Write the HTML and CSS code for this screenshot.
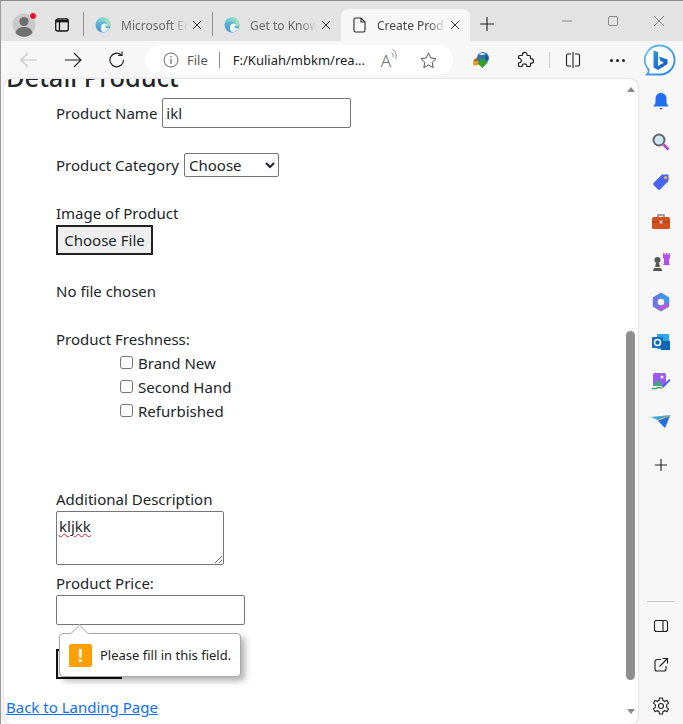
FILE: index.html
```html
<!DOCTYPE html>
<html lang="en">
<head>
  <meta charset="UTF-8">
  <title>Create Product</title>
  <link rel="stylesheet" href="styles.css">
</head>
<body>
  <div class="browser">
    <!-- tab strip -->
    <div class="tabstrip">
      <div class="profile">
        <svg width="26" height="26" viewBox="0 0 26 26"><circle cx="13" cy="13" r="11.500" fill="#c9c9c9"/><circle cx="13" cy="9.500" r="4.600" fill="#6f6f6f"/><path d="M4.500 21c1-4.500 4.500-6 8.500-6s7.500 1.500 8.500 6a11.500 11.500 0 0 1-17 0z" fill="#6f6f6f"/></svg>
        <span class="profile-dot"></span>
      </div>
      <div class="tab-action">
        <svg width="16" height="16" viewBox="0 0 16 16" fill="none" stroke="#1a1a1a" stroke-width="1.300"><rect x="1.700" y="2" width="12.600" height="12" rx="2"/><path d="M5.500 5v9"/><path d="M2 4.200h12" stroke-width="2.400"/></svg>
      </div>
      <div class="tab">
        <svg class="favicon" width="16" height="16" viewBox="0 0 16 16"><use href="#edge"/></svg>
        <span class="tab-title">Microsoft Edge</span>
        <svg class="tab-close" width="10" height="10" viewBox="0 0 10 10"><path d="M1 1l8 8M9 1l-8 8" stroke="#333" stroke-width="1"/></svg>
      </div>
      <div class="tab">
        <svg class="favicon" width="16" height="16" viewBox="0 0 16 16"><use href="#edge"/></svg>
        <span class="tab-title">Get to Know</span>
        <svg class="tab-close" width="10" height="10" viewBox="0 0 10 10"><path d="M1 1l8 8M9 1l-8 8" stroke="#333" stroke-width="1"/></svg>
      </div>
      <div class="tab active">
        <svg class="favicon" width="14" height="16" viewBox="0 0 14 16" fill="none" stroke="#2b2b2b" stroke-width="1.100"><path d="M2.500 1h5.500l4 4v8.500a1.500 1.500 0 0 1-1.500 1.500h-8A1.500 1.500 0 0 1 1 13.500v-11A1.500 1.500 0 0 1 2.500 1z"/><path d="M8 1v4h4"/></svg>
        <span class="tab-title">Create Product</span>
        <svg class="tab-close" width="10" height="10" viewBox="0 0 10 10"><path d="M1 1l8 8M9 1l-8 8" stroke="#333" stroke-width="1"/></svg>
      </div>
      <svg class="new-tab" width="14" height="14" viewBox="0 0 14 14"><path d="M7 0v14M0 7h14" stroke="#222" stroke-width="1.100"/></svg>
      <div class="window-buttons">
        <svg width="12" height="12" viewBox="0 0 12 12"><path d="M1 6h10" stroke="#8a8a8a"/></svg>
        <svg width="12" height="12" viewBox="0 0 12 12"><rect x="1.500" y="1.500" width="9" height="9" rx="1.500" fill="none" stroke="#8a8a8a"/></svg>
        <svg width="12" height="12" viewBox="0 0 12 12"><path d="M1 1l10 10M11 1L1 11" stroke="#8a8a8a"/></svg>
      </div>
    </div>

    <!-- toolbar -->
    <div class="toolbar">
      <svg class="nav-icon" width="18" height="16" viewBox="0 0 18 16" fill="none" stroke="#c4c4c4" stroke-width="1.100"><path d="M17 8H1M8 1L1 8l7 7"/></svg>
      <svg class="nav-icon" width="18" height="16" viewBox="0 0 18 16" fill="none" stroke="#1f1f1f" stroke-width="1.100"><path d="M1 8h16M10 1l7 7-7 7"/></svg>
      <svg class="nav-icon" width="18" height="18" viewBox="0 0 18 18" fill="none" stroke="#1f1f1f" stroke-width="1.200"><path d="M15.500 9A6.800 6.800 0 1 1 13 3.700"/><path d="M14 .5v3.800h-3.800"/></svg>
      <div class="address">
        <svg width="16" height="16" viewBox="0 0 16 16" fill="none" stroke="#666"><circle cx="8" cy="8" r="7"/><path d="M8 7v5M8 4v1.400" stroke-width="1.200"/></svg>
        <span class="scheme">File</span>
        <span class="address-sep"></span>
        <span class="url">F:/Kuliah/mbkm/rea...</span>
        <span class="read-aloud">A<svg width="8" height="12" viewBox="0 0 8 12" fill="none" stroke="#888"><path d="M.5 3.500c1.500 1 2 3 1.500 4.500M1.500 .5c3.500 2 4.500 6 3 9"/></svg></span>
        <svg class="star" width="17" height="17" viewBox="0 0 17 17" fill="none" stroke="#555"><path d="M8.500 1l2.300 4.900 5.200.7-3.800 3.700 1 5.300-4.700-2.600-4.700 2.600 1-5.300L1 6.600l5.200-.7z"/></svg>
      </div>
      <svg class="ext idm" width="18" height="18" viewBox="0 0 18 18"><path d="M1 12c0-3 2-5.500 5-6l2 7-4 1.500c-2 .5-3-.5-3-2.500z" fill="#e2a020"/><path d="M1.500 10.500C2.500 8 5 7 7 7.500l.5 2C5.500 9.300 3.500 10 1.500 10.500z" fill="#d0442c"/><circle cx="11" cy="7" r="6" fill="#2f72b0"/><path d="M7 3.500c2-2 5-2 6.500-.5-1.500 1-4 1.500-6.500.5z" fill="#dbe8f0"/><path d="M14 4c1.500 1 2.500 3 2 5l-3-1z" fill="#1f4f88"/><path d="M7.500 8h5.500l.5 3H16l-5.500 6L5 12h3z" fill="#33a02c"/></svg>
      <svg class="ext puzzle" width="18" height="18" viewBox="0 0 18 18" fill="none" stroke="#1f1f1f" stroke-width="1.200" stroke-linejoin="round"><path d="M6.500 3.500C6.500 1 11 .5 11 3.500c0 .5 0 .8.500 1h2a1 1 0 0 1 1 1v2c.3.500 1 .2 1.500.3 2 .4 2 4 0 4.400-.5.100-1.200-.2-1.500.3v2a1 1 0 0 1-1 1h-2.500c-.5-.3 0-1-.3-1.500-.6-1.500-3.800-1.500-4.400 0-.3.500.2 1.200-.3 1.500H3.500a1 1 0 0 1-1-1v-2.500c.3-.5 1-.1 1.500-.3 1.800-.6 1.800-3.600 0-4.200-.5-.2-1.200.2-1.500-.3V5.500a1 1 0 0 1 1-1H6c.5-.2.500-.6.500-1z"/></svg>
      <span class="toolbar-sep"></span>
      <svg class="ext split" width="16" height="16" viewBox="0 0 16 16" fill="none" stroke="#1f1f1f" stroke-width="1.100"><path d="M6 2H3a1.500 1.500 0 0 0-1.500 1.500v9A1.500 1.500 0 0 0 3 14h3M10 2h3a1.500 1.500 0 0 1 1.500 1.500v9A1.500 1.500 0 0 1 13 14h-3M8 0v16"/></svg>
      <span class="more"><i></i><i></i><i></i></span>
      <svg class="bing" width="32" height="32" viewBox="0 0 32 32"><path d="M16 1.500a14.500 14.500 0 0 1 0 29H3c1.500-1.500 2-3 1.500-5A14.500 14.500 0 0 1 16 1.500z" fill="#fff" stroke="url(#bingRing)" stroke-width="1.800"/><path d="M9.500 6.500L14 8v14l6-3.500-3.500-1.500-1.700-4.500 8.700 3v4.500L14 26l-4.500-2.500z" fill="url(#bingB)"/></svg>
    </div>

    <div class="content">
      <!-- page area -->
      <div class="page">
        <div class="document">
          <h1 class="page-title">Detail Product</h1>
          <form class="product-form">
            <div class="row row-name">
              <label>Product Name</label>
              <input class="field field-name" type="text" value="ikl">
            </div>
            <div class="row row-category">
              <label>Product Category</label>
              <select class="field-select"><option>Choose</option></select>
            </div>
            <div class="row-image">
              <label>Image of Product</label>
              <button class="file-button" type="button">Choose File</button>
            </div>
            <p class="no-file">No file chosen</p>
            <div class="freshness">
              <label>Product Freshness:</label>
              <div class="check-list">
                <label class="check"><input type="checkbox">Brand New</label>
                <label class="check"><input type="checkbox">Second Hand</label>
                <label class="check"><input type="checkbox">Refurbished</label>
              </div>
            </div>
            <div class="description">
              <label>Additional Description</label>
              <textarea class="field-area" spellcheck="false">kljkk</textarea>
            </div>
            <div class="price">
              <label>Product Price:</label>
              <div class="price-field">
                <input class="field field-price" type="text">
                <div class="tooltip">
                  <span class="tooltip-arrow"></span>
                  <span class="tooltip-icon">!</span>
                  <span>Please fill in this field.</span>
                </div>
              </div>
            </div>
            <button class="submit-button" type="button"></button>
          </form>
          <a class="back-link" href="#">Back to Landing Page</a>
        </div>
        <div class="scrollbar">
          <span class="arrow-up"></span>
          <span class="thumb"></span>
          <span class="arrow-down"></span>
        </div>
      </div>

      <!-- edge sidebar -->
      <div class="sidebar">
        <svg width="20" height="20" viewBox="0 0 20 20"><path d="M10 1c3.500 0 5.500 2.500 5.500 6v4l2 3.500h-15l2-3.500V7c0-3.500 2-6 5.500-6z" fill="#1f6ff0"/><path d="M8 16h4l-2 2z" fill="#777"/></svg>
        <svg width="20" height="20" viewBox="0 0 20 20"><circle cx="8" cy="8" r="5.500" fill="#cfe6f5" stroke="#666" stroke-width="2"/><path d="M12.500 12.500l5 5" stroke="#b93ad0" stroke-width="2.500"/></svg>
        <svg width="20" height="20" viewBox="0 0 20 20"><path d="M11 2.500h6.500V9L9 17.500a1.500 1.500 0 0 1-2 0L2.500 13a1.500 1.500 0 0 1 0-2z" fill="#4a63f0"/><circle cx="14.500" cy="5.500" r="1.500" fill="#f2c230"/></svg>
        <svg width="20" height="20" viewBox="0 0 20 20"><path d="M7 5V3h6v2" fill="none" stroke="#888" stroke-width="1.500"/><rect x="1" y="5" width="18" height="12" rx="1.500" fill="#d3501f"/><path d="M1 10h18" stroke="#a63a12"/><rect x="8.500" y="8.500" width="3" height="3" fill="#c9c9c9"/></svg>
        <svg width="20" height="20" viewBox="0 0 20 20"><path d="M12 1h1.500v1.500H15V1h1.500v1.500H18V1h1v5l-1 1v4l1 2h-7l1-2V7l-1-1z" fill="#b44ff0"/><circle cx="6.500" cy="8" r="3" fill="#555"/><path d="M5 11h3l1 4H4zM2 19c0-2 1-3 2-3h5c1 0 2 1 2 3z" fill="#555"/></svg>
        <svg width="20" height="20" viewBox="0 0 20 20"><path d="M10 1.500L17.500 6v8L10 18.500 2.500 14V6z" fill="#6a78e0" stroke="#6a78e0" stroke-linejoin="round" stroke-width="1.500"/><path d="M10 1.500L17.500 6v6l-3.500-2c0-2.500-1.500-4-4-4.500L6 6.500z" fill="#2f9fe0"/><path d="M17.500 12v2L10 18.500 5.500 16l4.500-2c2 0 3-1 4-3z" fill="#b65cd8"/><circle cx="10" cy="10" r="3.300" fill="#f7f7f7"/></svg>
        <svg width="20" height="20" viewBox="0 0 20 20"><path d="M6 2h11a1 1 0 0 1 1 1v13a1 1 0 0 1-1 1H6z" fill="#28a8ea"/><path d="M10 9h9v9H10z" fill="#0a64b0"/><rect x="1" y="5" width="11" height="11" rx="1" fill="#0f6cbd"/><circle cx="6.500" cy="10.500" r="3" fill="none" stroke="#fff" stroke-width="1.500"/></svg>
        <svg width="20" height="20" viewBox="0 0 20 20"><rect x="2" y="1" width="13" height="13" rx="1.500" fill="#9a5cf0"/><path d="M2 13l5-5 5 6H2z" fill="#3fa878"/><circle cx="11" cy="5" r="1.500" fill="#fff"/><path d="M1 17c2-2 3 1 5-1s2 1 4-.5" fill="none" stroke="#2f9a5c" stroke-width="1.300"/><path d="M18 7l1.500 1.500-7 7-3 1.500 1.500-3z" fill="#4a63f0"/><path d="M9.500 17l1.500-3 1.500 1.500z" fill="#f2b030"/></svg>
        <svg width="22" height="20" viewBox="0 0 22 20"><path d="M1 5l20-2-7 8z" fill="#3aa8e8"/><path d="M21 3L7 8l6 3z" fill="#f2b030"/><path d="M8 9l12-5-5 12-4-4z" fill="#1f6ff0"/></svg>
        <svg class="side-add" width="14" height="14" viewBox="0 0 14 14"><path d="M7 1v12M1 7h12" stroke="#222" stroke-width="1.100"/></svg>
        <div class="sidebar-bottom">
          <span class="sidebar-line"></span>
          <svg width="16" height="14" viewBox="0 0 16 14" fill="none" stroke="#1f1f1f" stroke-width="1.100"><rect x="1.500" y="1.500" width="13" height="11" rx="2"/><path d="M10 1.500v11"/></svg>
          <svg width="16" height="16" viewBox="0 0 16 16" fill="none" stroke="#1f1f1f" stroke-width="1.100"><path d="M8 2.500H4A2 2 0 0 0 2 4.500v7.500a2 2 0 0 0 2 2h7a2 2 0 0 0 2-2V9M6.500 9.500L14 2M9.500 1.500H14.500V6.500"/></svg>
          <svg width="18" height="18" viewBox="0 0 18 18" fill="none" stroke="#1f1f1f" stroke-width="1.100"><circle cx="9" cy="9" r="2.500"/><path d="M7.500 1h3l.5 2.300 1.700 1 2.300-.8 1.500 2.600-1.800 1.600v2.600l1.800 1.600-1.500 2.600-2.300-.8-1.700 1-.5 2.300h-3L7 14.700l-1.700-1-2.300.8-1.500-2.600 1.800-1.600V7.700L1.500 6.100 3 3.500l2.300.8 1.700-1z"/></svg>
        </div>
      </div>
    </div>
  </div>

  <!-- shared logos -->
  <svg width="0" height="0" class="defs">
    <defs>
      <linearGradient id="edgeA" x1="0" y1="0" x2="0" y2="1"><stop offset="0" stop-color="#62c4dc"/><stop offset="1" stop-color="#4f93cf"/></linearGradient>
      <linearGradient id="edgeB" x1="0" y1="0" x2="1" y2="0"><stop offset="0" stop-color="#6cc5dc"/><stop offset="1" stop-color="#a6e4b0"/></linearGradient>
      <linearGradient id="bingRing" x1="0" y1="0" x2="1" y2="1"><stop offset="0" stop-color="#6cc4f2"/><stop offset="1" stop-color="#1f7fe0"/></linearGradient>
      <linearGradient id="bingB" x1="0" y1="0" x2="1" y2="1"><stop offset="0" stop-color="#2a9ae8"/><stop offset="1" stop-color="#1450c0"/></linearGradient>
      <symbol id="edge" viewBox="0 0 16 16">
        <circle cx="8" cy="8" r="7.500" fill="url(#edgeA)"/>
        <path d="M2 4C3.500 1.800 5.700.5 8.500.5c4 0 7 3 7 6.500 0 2-2 3-3.500 2.500C12.500 6 10 4.500 7 4.800 5 5 3.500 5 2 4z" fill="url(#edgeB)"/>
        <path d="M7 7.500c1.500-1.500 4-1.300 5 .5 0 1.500-2 1.800-2.500 1.300 1 1.500 3 2.700 5 1.700-1 2-3 4-6 4-2.500 0-3.500-5-1.500-7.500z" fill="#f2f8fb"/>
      </symbol>
    </defs>
  </svg>
</body>
</html>
```

FILE: styles.css
```css
/* window */
html, body {
  margin: 0;
  padding: 0;
}
body {
  width: 683px;
  height: 724px;
  overflow: hidden;
  font-family: "Noto Sans", "Open Sans", sans-serif;
  color: #1f1f1f;
}
.defs {
  position: absolute;
}
.browser {
  display: flex;
  flex-direction: column;
  width: 683px;
  height: 724px;
  background: #f7f7f7;
  box-sizing: border-box;
  border-top: 1px solid #8c8c8c;
  border-left: 1px solid #9a9a9a;
}

/* tab strip */
.tabstrip {
  display: flex;
  align-items: flex-end;
  height: 40px;
  flex: none;
  background: #e3e3e3;
}
.profile {
  position: relative;
  width: 26px;
  height: 26px;
  margin: 0 0 3px 10px;
}
.profile-dot {
  position: absolute;
  top: 0;
  right: 0;
  width: 6px;
  height: 6px;
  border-radius: 50%;
  background: #e81123;
  border: 1px solid #e3e3e3;
}
.tab-action {
  width: 16px;
  height: 16px;
  margin: 0 0 8px 17px;
}
.tab-action svg {
  display: block;
}
.tab {
  display: flex;
  align-items: center;
  box-sizing: border-box;
  width: 129px;
  height: 32px;
  padding: 0 10px 0 11px;
  font-size: 12px;
  color: #6a6a6a;
  border-left: 1px solid #8f8f8f;
  border-image: linear-gradient(to bottom, transparent 4px, #8f8f8f 4px, #8f8f8f 26px, transparent 26px) 1;
}
.tab:nth-of-type(3) {
  margin-left: 13px;
}
.favicon {
  flex: none;
  margin: 0 10px 0 0;
}
.tab-title {
  flex: 1;
  overflow: hidden;
  white-space: nowrap;
  -webkit-mask-image: linear-gradient(to right, #000 75%, transparent 100%);
  mask-image: linear-gradient(to right, #000 75%, transparent 100%);
}
.tab-close {
  flex: none;
  margin-left: 4px;
}
.tab.active {
  background: #f7f7f7;
  border: 0;
  border-radius: 7px 7px 0 0;
  padding-left: 12px;
  color: #444;
}
.new-tab {
  margin: 0 0 10px 10px;
}
.window-buttons {
  display: flex;
  gap: 34px;
  margin: 0 0 14px auto;
  padding-right: 18px;
}

/* toolbar */
.toolbar {
  display: flex;
  align-items: center;
  flex: none;
  height: 38px;
  padding-left: 19px;
}
.nav-icon {
  flex: none;
  margin-right: 26px;
}
.address {
  display: flex;
  align-items: center;
  box-sizing: border-box;
  width: 308px;
  height: 30px;
  margin-left: -7px;
  padding: 0 16px 0 18px;
  background: #fff;
  border-radius: 15px;
  font-size: 13px;
}
.scheme {
  margin-left: 8px;
  color: #555;
}
.address-sep {
  width: 1px;
  height: 16px;
  margin: 0 13px 0 11px;
  background: #8a8a8a;
}
.url {
  white-space: nowrap;
  color: #1a1a1a;
}
.read-aloud {
  display: flex;
  align-items: flex-start;
  margin-left: auto;
  font-size: 17px;
  font-weight: 300;
  color: #707070;
}
.star {
  margin-left: 21px;
}
.ext {
  flex: none;
}
.idm {
  margin-left: 19px;
}
.puzzle {
  margin-left: 26px;
}
.toolbar-sep {
  width: 1px;
  height: 16px;
  margin: 0 15px 0 15px;
  background: #cfcfcf;
}
.more {
  display: flex;
  gap: 3px;
  margin-left: 29px;
}
.more i {
  width: 3px;
  height: 3px;
  border-radius: 50%;
  background: #1f1f1f;
}
.bing {
  flex: none;
  margin-left: 19px;
}

/* main area */
.content {
  display: flex;
  flex: 1;
  min-height: 0;
}
.page {
  display: flex;
  width: 634px;
  margin-left: 3px;
  background: #fff;
  border-radius: 8px;
  box-shadow: 0 0 2px rgba(0,0,0,0.25);
  overflow: hidden;
}
.document {
  flex: 1;
  min-width: 0;
  padding-left: 1px;
  font-size: 15px;
  line-height: 24px;
  color: #212529;
}
.page-title {
  margin: -17px 0 0 1px;
  font-size: 25.4px;
  font-weight: 500;
  line-height: 30px;
}

/* form */
.product-form {
  padding-left: 51px;
}
.product-form label {
  white-space: nowrap;
}
.row {
  display: flex;
  align-items: center;
  gap: 5px;
}
.row-name {
  margin-top: 6px;
}
.row-category {
  margin-top: 25px;
}
.field {
  box-sizing: border-box;
  height: 30px;
  padding: 0 3px;
  font: inherit;
  color: inherit;
  border: 1px solid #767676;
  border-radius: 2px;
  background: #fff;
}
.field-name {
  width: 189px;
}
.field-price {
  display: block;
  width: 189px;
}
.field-select {
  width: 95px;
  height: 24px;
  font: inherit;
  line-height: 20px;
  color: inherit;
  background: #fff;
  border: 1px solid #767676;
  border-radius: 2px;
}
.row-image {
  margin-top: 24px;
}
.row-image label {
  display: block;
}
.file-button {
  display: block;
  box-sizing: border-box;
  width: 97px;
  height: 30px;
  padding: 0;
  font: inherit;
  color: inherit;
  background: #efefef;
  border: 2px solid #222;
}
.no-file {
  margin: 24px 0 0;
}
.freshness {
  margin-top: 24px;
}
.freshness > label {
  display: block;
}
.check-list {
  padding-left: 64px;
}
.check {
  display: flex;
  align-items: center;
  height: 24px;
}
.check input {
  width: 13px;
  height: 13px;
  margin: 0 5px 2px 0;
}
.description {
  margin-top: 64px;
}
.description label {
  display: block;
  line-height: 24px;
}
.field-area {
  display: block;
  box-sizing: border-box;
  width: 168px;
  height: 54px;
  padding: 3px 2px 2px;
  font: inherit;
  line-height: 22px;
  color: inherit;
  border: 1px solid #767676;
  border-radius: 2px;
  text-decoration: underline wavy #e81123 1px;
}
.price {
  margin-top: 6px;
}
.price label {
  display: block;
}
.price-field {
  position: relative;
}
.tooltip {
  position: absolute;
  top: 38px;
  left: 3px;
  z-index: 5;
  display: flex;
  align-items: center;
  box-sizing: border-box;
  width: 182px;
  height: 44px;
  padding-left: 9px;
  font-size: 13px;
  color: #222;
  background: #fff;
  border: 1px solid #a8a8a8;
  border-radius: 4px;
  box-shadow: 4px 4px 6px rgba(0,0,0,0.3);
}
.tooltip-arrow {
  position: absolute;
  top: -7px;
  left: 13px;
  width: 12px;
  height: 12px;
  background: #fff;
  border-top: 1px solid #bdbdbd;
  border-left: 1px solid #bdbdbd;
  transform: rotate(45deg);
}
.tooltip-icon {
  flex: none;
  width: 23px;
  height: 23px;
  margin-right: 8px;
  border-radius: 2px;
  background: #ffa000;
  color: #fff;
  font-size: 17px;
  font-weight: 700;
  line-height: 23px;
  text-align: center;
}
.submit-button {
  display: block;
  box-sizing: border-box;
  width: 66px;
  height: 30px;
  margin-top: 24px;
  background: #efefef;
  border: 2px solid #111;
}
.back-link {
  display: block;
  margin: 16px 0 0 1px;
  color: #0d6efd;
}

/* page scrollbar */
.scrollbar {
  display: flex;
  flex-direction: column;
  align-items: center;
  flex: none;
  width: 15px;
  box-sizing: border-box;
  padding: 8px 0 10px;
}
.arrow-up, .arrow-down {
  width: 0;
  height: 0;
  border-left: 4px solid transparent;
  border-right: 4px solid transparent;
}
.arrow-up {
  border-bottom: 5px solid #8a8a8a;
}
.arrow-down {
  margin-top: 29px;
  border-top: 5px solid #8a8a8a;
}
.thumb {
  width: 9px;
  height: 349px;
  margin-top: auto;
  border-radius: 5px;
  background: #8f8f8f;
}

/* sidebar */
.sidebar {
  flex: 1;
  display: flex;
  flex-direction: column;
  align-items: center;
  gap: 20px;
  padding-top: 13px;
  min-width: 0;
}
.sidebar svg {
  flex: none;
}
.side-add {
  margin-top: 6px;
}
.sidebar-bottom {
  display: flex;
  flex-direction: column;
  align-items: center;
  gap: 24px;
  margin-top: auto;
  padding-bottom: 9px;
}
.sidebar-line {
  width: 28px;
  height: 1px;
  margin-bottom: -7px;
  background: #c4c4c4;
}
```
